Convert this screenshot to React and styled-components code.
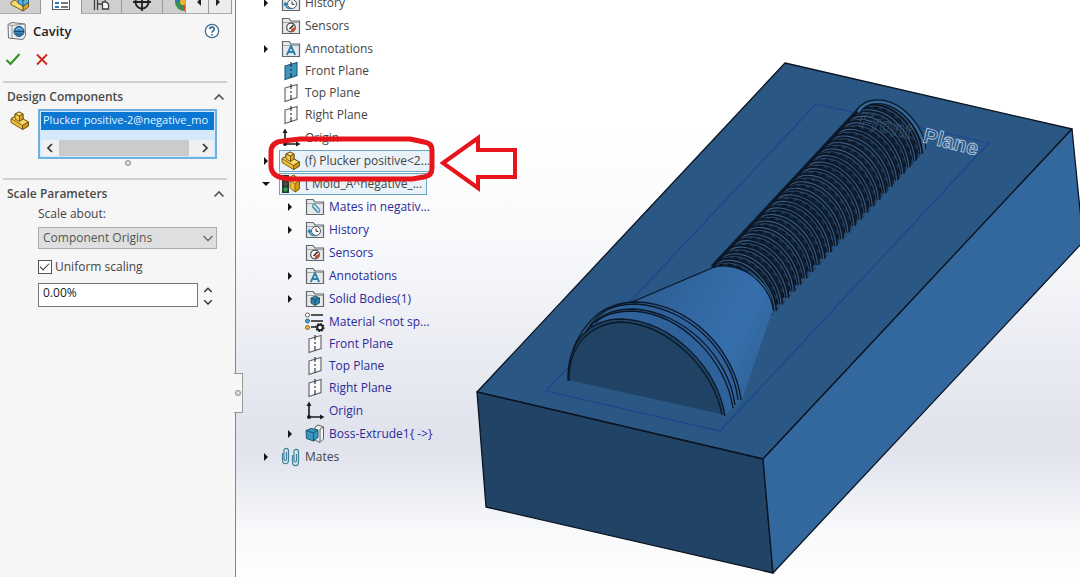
import React, { useState } from "react";
import styled, { createGlobalStyle } from "styled-components";

const GlobalStyle = createGlobalStyle`
  *, *::before, *::after { box-sizing: border-box; }
  body {
    margin: 0;
    font-family: "Open Sans", "Noto Sans", sans-serif;
    font-size: 12px;
    line-height: 16px;
    color: #444;
    background: #fff;
  }
  button, input, select { font: inherit; color: inherit; }
`;

/* ---------- icons ---------- */

const PartIcon = () => (
  <svg width="20" height="20" viewBox="0 0 20 20" aria-hidden="true">
    <g stroke="#6e5110" strokeWidth="0.9" strokeLinejoin="round">
      <path d="M1 7.500 L5 5.500 V3 L9 1 L13 3 V8 L18.500 11 V15 L12.500 18.500 L1 11.500 Z" fill="#f0bf33" />
      <path d="M5 3 L9 1 L13 3 L9.500 5 Z" fill="#fbe793" />
      <path d="M1 7.500 L5 5.500 L9.500 8.500 V10 L13 8 L18.500 11 L12.500 14.500 Z" fill="#f9dc70" />
      <path d="M12.500 14.500 L18.500 11 V15 L12.500 18.500 Z" fill="#cf9a1c" />
      <path d="M9.500 5 L13 3 V8 L9.500 10.500 Z" fill="#dba726" />
      <path d="M5 3 L9.500 5 V10.500 L5 8 Z" fill="#f5cb45" />
    </g>
  </svg>
);

const AssemblyIcon = () => (
  <svg width="20" height="20" viewBox="0 0 20 20" aria-hidden="true">
    <g stroke="#6e5110" strokeWidth="0.9" strokeLinejoin="round">
      <path d="M1 10 L5 8 L13 14 V19 L1 12.500 Z" fill="#f9dc70" />
      <path d="M13 14 L18.500 10.500 V15 L13 19 Z" fill="#d9a220" />
      <path d="M8 6 L13 3 L18.500 6 V10.500 L13 14 L8 11 Z" fill="#5fb0d8" stroke="#1d5878" />
      <path d="M8 6 L13 8.500 L18.500 6 M13 8.500 V14" fill="none" stroke="#1d5878" />
    </g>
  </svg>
);

const CavityIcon = () => (
  <svg width="20" height="20" viewBox="0 0 20 20" aria-hidden="true">
    <path d="M1 3.500 L5 1.500 L18 3 L18.500 14.500 L16 18.500 L1.500 17 Z" fill="#eef1f3" stroke="#68707a" />
    <path d="M1 3.500 L5 4.500 L18 3 M5 4.500 V17" fill="none" stroke="#8a929a" />
    <circle cx="12" cy="10.500" r="5" fill="#3a86ba" stroke="#1d4a70" />
    <path d="M7 10.500 H17 M9 13 H15" stroke="#1d4a70" />
    <path d="M9 8.500 Q12 6 15 8.500" stroke="#a2d1ee" fill="none" />
  </svg>
);

const HelpIcon = () => (
  <svg width="16" height="16" viewBox="0 0 16 16" aria-hidden="true">
    <circle cx="8" cy="8" r="6.700" fill="#fff" stroke="#4b6d8c" strokeWidth="1.300" />
    <path d="M5.800 6.300 C5.800 3.400 10.300 3.500 10.200 6.200 C10.200 7.900 8 7.900 8 9.800 M8 11 V12.500" fill="none" stroke="#27669c" strokeWidth="1.600" />
  </svg>
);

const Chevron = ({ dir = "up", size = 12, color = "#555" }) => {
  const d = {
    up: "M1.500 8.500 L6 4 L10.500 8.500",
    down: "M1.500 4 L6 8.500 L10.500 4",
    left: "M8 2 L4 6 L8 10",
    right: "M4 2 L8 6 L4 10",
  }[dir];
  return (
    <svg width={size} height={size} viewBox="0 0 12 12" aria-hidden="true">
      <path d={d} fill="none" stroke={color} strokeWidth="1.700" />
    </svg>
  );
};

const folderArt = {
  history: (
    <g fill="none">
      <circle cx="11" cy="11" r="4.500" fill="#fff" stroke="#4a5560" />
      <path d="M11 8.500 V11.300 H13.500" stroke="#222" />
      <path d="M4 10.500 C5 14.500 7.500 16 10.500 15.500 M3 12.500 L4.200 9.800 L6.500 12" stroke="#2f82b2" strokeWidth="1.400" />
    </g>
  ),
  sensor: (
    <g fill="none">
      <circle cx="10" cy="11.500" r="4.300" fill="#fff" stroke="#4c4c4c" strokeWidth="1.200" />
      <path d="M10 15.800 A4.300 4.300 0 0 0 14.300 11.500 L12 11.500 L10 13.500 Z" fill="#d44a28" />
      <path d="M8.500 13 L12.500 9" stroke="#222" strokeWidth="1.500" />
    </g>
  ),
  annotation: (
    <path d="M5.800 16 L10 7 L14.200 16 M7.500 13 H12.500" fill="none" stroke="#2d7ea8" strokeWidth="1.800" />
  ),
  mates: (
    <path d="M7 9 L12 15 C14.500 16 15.500 13.500 14 12 L10 7.500 C8 6.500 7 8.500 8.200 10 L12 14" fill="none" stroke="#4b94b8" strokeWidth="1.300" />
  ),
  solid: (
    <g stroke="#164561" strokeWidth="0.800">
      <path d="M6 9 L10.500 7 L14.500 9 L14.500 14 L10 16.500 L6 14 Z" fill="#2d83aa" />
      <path d="M6 9 L10 11 L14.500 9 M10 11 V16" fill="none" />
    </g>
  ),
};

const FolderIcon = ({ art }) => (
  <svg width="20" height="20" viewBox="0 0 20 20" aria-hidden="true">
    <path d="M1.500 17.500 V2.500 H8 L10 5 H18.500 V17.500 Z" fill="#e6e8ea" stroke="#63676c" strokeWidth="1.200" />
    <path d="M2 6.500 H18" stroke="#a2a6aa" />
    {folderArt[art]}
  </svg>
);

const PlaneIcon = ({ filled }) => (
  <svg width="20" height="20" viewBox="0 0 20 20" aria-hidden="true">
    <path d="M4 5 L16 1.500 V14.500 L4 18.500 Z" fill={filled ? "#3f93bf" : "#fafafa"} stroke={filled ? "#1f5878" : "#5d6063"} strokeWidth="1.100" />
    <path d="M10 1 V19" stroke="#26292c" strokeWidth="1.100" strokeDasharray="5 2 2 2" />
  </svg>
);

const OriginIcon = () => (
  <svg width="20" height="20" viewBox="0 0 20 20" aria-hidden="true">
    <path d="M4 3 V16 H17" fill="none" stroke="#1c1c1c" strokeWidth="1.600" />
    <path d="M1.500 5 L4 0.500 L6.500 5 Z M15 13.500 L19.500 16 L15 18.500 Z" fill="#1c1c1c" />
    <circle cx="4" cy="16" r="2" fill="#1c1c1c" />
  </svg>
);

const MoldIcon = () => (
  <svg width="20" height="20" viewBox="0 0 20 20" aria-hidden="true">
    <rect x="1" y="1" width="7" height="18" fill="#2a332c" />
    <circle cx="4.500" cy="4.500" r="2.200" fill="#c03a2b" />
    <circle cx="4.500" cy="10" r="2.200" fill="#4c4a3a" />
    <circle cx="4.500" cy="15.500" r="2.200" fill="#31a04a" />
    <g stroke="#7a5a10" strokeWidth="0.800">
      <path d="M9 3 L13 1 L18.500 6 V15 L14 18 L9 14 Z" fill="#f0bf33" />
      <path d="M9 3 L13 1 L14 5 L18.500 7 L14 9.500 L9 7 Z" fill="#fae080" />
      <path d="M14 9.500 L18.500 7 V15 L14 18 Z" fill="#cf9a1c" />
    </g>
  </svg>
);

const MaterialIcon = () => (
  <svg width="20" height="20" viewBox="0 0 20 20" aria-hidden="true">
    <path d="M6 3 H18 M6 9 H18 M6 15 H11" stroke="#222" strokeWidth="1.500" />
    <circle cx="2.500" cy="3" r="2" fill="#fff" stroke="#666" />
    <circle cx="2.500" cy="9" r="2" fill="#56a7cf" stroke="#2a6580" />
    <circle cx="2.500" cy="15.500" r="2" fill="#f0be2e" stroke="#86661a" />
    <circle cx="15" cy="15.500" r="2.800" fill="#fff" stroke="#222" strokeWidth="2" />
    <circle cx="15" cy="15.500" r="4" fill="none" stroke="#222" strokeWidth="1.200" strokeDasharray="1.600 1.500" />
  </svg>
);

const ExtrudeIcon = () => (
  <svg width="20" height="20" viewBox="0 0 20 20" aria-hidden="true">
    <path d="M10 3 L13 1 L18.500 3 V15 L15 18.500 L10 16 Z" fill="#f3f4f5" stroke="#5d6063" />
    <path d="M15 5 L18.500 3 M15 5 V18" stroke="#5d6063" />
    <path d="M1 6.500 L6 4.500 L13 6 V13.500 L8.500 17 L1.500 14.500 Z" fill="#3b97bd" stroke="#18566f" />
    <path d="M1 6.500 L8.500 9 L13 6 M8.500 9 V17" fill="none" stroke="#18566f" />
  </svg>
);

const ClipsIcon = () => (
  <svg width="20" height="20" viewBox="0 0 20 20" aria-hidden="true">
    <g fill="none" stroke="#3a8198" strokeWidth="1.200">
      <path d="M1.500 6 V13 C1.500 18 7.500 18 7.500 13 V4 C7.500 0.500 2.500 0.500 3 4 V12 C3.500 14 5.500 14 5.500 12 V5" />
      <path d="M11.500 8 V14.500 C11.500 20 17.500 20 17.500 14.500 V5 C17.500 1.500 12.500 1.500 13 5 V13.500 C13.500 15.500 15.500 15.500 15.500 13.500 V7" />
    </g>
  </svg>
);

const PropertyIcon = () => (
  <svg width="20" height="20" viewBox="0 0 20 20" aria-hidden="true">
    <rect x="1.500" y="1.500" width="17" height="16" fill="#fff" stroke="#55595e" />
    <path d="M4 7 H8 M4 11 H8 M4 15 H8" stroke="#2b7bb0" strokeWidth="2" />
    <path d="M10 7 H17 M10 11 H17 M10 15 H17" stroke="#4c5054" strokeWidth="1.300" />
  </svg>
);

const ConfigIcon = () => (
  <svg width="20" height="20" viewBox="0 0 20 20" aria-hidden="true">
    <path d="M3.500 2 V18 M6.500 2 V18 M6.500 12 H12" fill="none" stroke="#3c4044" strokeWidth="1.300" />
    <path d="M9 6 H14 V9 M11.500 10 H15 L17.500 12 V17 H11.500 Z" fill="#fff" stroke="#3c4044" strokeWidth="1.300" />
  </svg>
);

const TargetIcon = () => (
  <svg width="20" height="20" viewBox="0 0 20 20" aria-hidden="true">
    <circle cx="10" cy="10" r="6.500" fill="none" stroke="#222" strokeWidth="1.800" />
    <path d="M10 1 V19 M1 10 H19" stroke="#222" strokeWidth="1.800" />
  </svg>
);

const AppearanceIcon = () => (
  <svg width="20" height="20" viewBox="0 0 20 20" aria-hidden="true">
    <path d="M10 10 L1 10 A9 9 0 0 1 10 1 Z" fill="#2b76b6" />
    <path d="M10 10 L10 1 A9 9 0 0 1 19 10 Z" fill="#e6b92e" />
    <path d="M10 10 L1 10 A9 9 0 0 0 10 19 Z" fill="#37904a" />
    <path d="M10 10 L19 10 A9 9 0 0 1 10 19 Z" fill="#d8432f" />
    <circle cx="9" cy="10" r="3" fill="#e6b92e" />
  </svg>
);

/* ---------- property panel ---------- */

const Page = styled.div`
  display: flex;
  min-height: 100vh;
  overflow: hidden;
`;

const Sidebar = styled.aside`
  position: relative;
  flex: 0 0 236px;
  background: #f6f6f6;
  border-right: 1px solid #85878a;
`;

const TabStrip = styled.nav`
  display: flex;
  height: 24px;
  margin-top: -10px;
  padding-right: 3px;
`;

const Tab = styled.button`
  display: flex;
  flex: ${(p) => (p.$narrow ? "0 0 23px" : "1 1 0")};
  align-items: center;
  justify-content: ${(p) => (p.$cut ? "flex-start" : "center")};
  min-width: 0;
  padding: ${(p) => (p.$cut ? "0 0 0 11px" : "0")};
  overflow: hidden;
  border: 0;
  border-right: 1px solid #9a9a9a;
  border-bottom: ${(p) => (p.$active ? "0" : "1px solid #adadad")};
  background: ${(p) => (p.$active ? "#f6f6f6" : p.$scroll ? "#ececec" : "#cfcfcf")};

  svg { flex: none; }
`;

const Arrow = styled.span`
  border: 4px solid transparent;
  border-left-color: ${(p) => (p.$left ? "transparent" : "#222")};
  border-right-color: ${(p) => (p.$left ? "#222" : "transparent")};
`;

const TitleBar = styled.header`
  display: flex;
  align-items: center;
  gap: 6px;
  height: 34px;
  padding: 0 15px 0 7px;
`;

const Title = styled.h1`
  flex: 1;
  margin: 0;
  font-size: 13px;
  font-weight: 600;
  color: #222;
`;

const IconButton = styled.button`
  display: flex;
  align-items: center;
  justify-content: center;
  padding: 0;
  border: 0;
  background: transparent;
`;

const Actions = styled.div`
  display: flex;
  gap: 14px;
  height: 33px;
  padding: 3px 5px;
  align-items: flex-start;
`;

const Section = styled.section`
  margin: 0 8px 0 3px;
  padding: 5px 0 0 4px;
  border-top: 2px solid #cfcfcf;
  height: ${(p) => (p.$short ? "97px" : "auto")};
`;

const SectionHead = styled.div`
  display: flex;
  align-items: center;
  justify-content: space-between;
  height: 17px;
  padding-right: 2px;
`;

const SectionTitle = styled.h2`
  margin: 0;
  font-size: 12px;
  font-weight: 600;
  color: #4a4a4a;
`;

const Selection = styled.div`
  display: grid;
  grid-template-columns: 31px 1fr;
  padding: 4px 10px 0 0;

  > svg { margin: 2px 0 0 3px; }
`;

const ListBox = styled.div`
  min-width: 0;
  height: 50px;
  padding: 1px;
  border: 2px solid #6cb2e0;
  background: #d6e9fa;
`;

const ListOption = styled.div`
  height: 18px;
  padding-left: 2px;
  font-size: 11px;
  white-space: nowrap;
  color: #e9f5ff;
  background: #0c76d3;
`;

const ScrollBar = styled.div`
  display: grid;
  grid-template-columns: 18px 1fr 18px;
  height: 16px;
  margin-top: 10px;
  background: #f0f0f0;
`;

const Thumb = styled.span`
  margin-right: 7px;
  background: #cbcbcb;
`;

const Grip = styled.span`
  display: block;
  width: 6px;
  height: 6px;
  border: 1px solid #8a8a8a;
  border-radius: 50%;
  background: #ddd;
`;

const GripRow = styled.div`
  display: flex;
  justify-content: center;
  grid-column: 2;
  padding-top: 1px;
`;

const Fields = styled.div`
  display: flex;
  flex-direction: column;
  align-items: stretch;
  padding: 4px 10px 0 31px;
`;

const SelectFrame = styled.div`
  display: grid;
  align-items: center;
  margin: 5px 0 9px;

  > * { grid-area: 1 / 1; }
  > svg { justify-self: end; margin-right: 3px; pointer-events: none; }
`;

const Select = styled.select`
  appearance: none;
  width: 100%;
  height: 22px;
  padding: 0 20px 0 4px;
  border: 1px solid #acacac;
  border-radius: 0;
  background: #dfdfdf;
  color: #555;
`;

const CheckLabel = styled.label`
  display: flex;
  align-items: center;
  gap: 3px;
  height: 18px;
`;

const Check = styled.input`
  appearance: none;
  width: 14px;
  height: 14px;
  margin: 0;
  border: 1px solid #555;
  background: #fff;

  &:checked::after {
    content: "";
    display: block;
    width: 9px;
    height: 5px;
    margin: 2px 1px;
    border: solid #333;
    border-width: 0 0 1px 1px;
    transform: rotate(-45deg);
  }
`;

const SpinRow = styled.div`
  display: grid;
  grid-template-columns: 1fr 19px;
  height: 24px;
  margin-top: 7px;
`;

const NumberBox = styled.input`
  min-width: 0;
  padding: 0 4px 4px;
  border: 1px solid #777;
  background: #fff;
  color: #222;
`;

const SpinButtons = styled.div`
  display: flex;
  flex-direction: column;
  align-items: center;
  justify-content: space-between;
  padding-top: 2px;
`;

const PanelHandle = styled.button`
  position: absolute;
  top: 373px;
  left: 234px;
  z-index: 2;
  display: flex;
  align-items: center;
  justify-content: center;
  width: 9px;
  height: 40px;
  padding: 0;
  border: 1px solid #999;
  border-left: 0;
  background: #f6f6f6;
`;

/* ---------- graphics area ---------- */

const Viewport = styled.main`
  position: relative;
  flex: 1;
  min-width: 0;
  overflow: hidden;
  background: linear-gradient(#fff 0%, #fff 22%, #f8f9fb 42%, #eceef4 58%, #e0e3ec 76%, #e4e7ef 81%, #f8f9fb 92%, #fefefe 100%);
`;

const ModelCanvas = styled.svg`
  position: absolute;
  inset: 0;
  width: 100%;
  height: 100%;
`;

const CallOut = styled.svg`
  position: absolute;
  top: 0;
  left: 0;
  pointer-events: none;
`;

const Tree = styled.ul`
  position: relative;
  width: 200px;
  margin: -9px 0 0 23px;
  padding: 0;
  list-style: none;
`;

const Branch = styled.ul`
  margin: 0;
  padding: 0 0 0 24px;
  list-style: none;
`;

const Row = styled.div`
  display: flex;
  align-items: center;
  height: ${(p) => (p.$plane ? "22px" : "23px")};
  color: ${(p) => (p.$nested ? "#2a2a98" : "#444")};
`;

const Twisty = styled.button`
  display: flex;
  flex: 0 0 20px;
  width: 20px;
  padding: 0 0 0 3px;
  border: 0;
  background: transparent;
`;

const Marker = styled.svg`
  width: 8px;
  height: 8px;
  fill: #161616;
`;

const ItemFace = styled.span`
  display: flex;
  align-items: center;
  gap: 4px;
  height: ${(p) => (p.$boxed ? "22px" : "20px")};
  width: ${(p) => (p.$boxed ? `${p.$boxed}px` : "auto")};
  padding-left: 2px;
  outline: ${(p) => (p.$boxed ? "1px solid #6ea5c4" : "none")};
  outline-offset: -1px;
  background: ${(p) => (p.$boxed ? "#e9f2f8" : "transparent")};
  white-space: nowrap;
`;

const items = [
  { label: "History", icon: <FolderIcon art="history" />, open: false },
  { label: "Sensors", icon: <FolderIcon art="sensor" /> },
  { label: "Annotations", icon: <FolderIcon art="annotation" />, open: false },
  { label: "Front Plane", icon: <PlaneIcon filled />, plane: true },
  { label: "Top Plane", icon: <PlaneIcon />, plane: true },
  { label: "Right Plane", icon: <PlaneIcon />, plane: true },
  { label: "Origin", icon: <OriginIcon /> },
  { label: "(f) Plucker positive<2...", icon: <PartIcon />, open: false, boxed: 152 },
  {
    label: "[ Mold_A^negative_...",
    icon: <MoldIcon />,
    open: true,
    boxed: 148,
    children: [
      { label: "Mates in negativ...", icon: <FolderIcon art="mates" />, open: false },
      { label: "History", icon: <FolderIcon art="history" />, open: false },
      { label: "Sensors", icon: <FolderIcon art="sensor" /> },
      { label: "Annotations", icon: <FolderIcon art="annotation" />, open: false },
      { label: "Solid Bodies(1)", icon: <FolderIcon art="solid" />, open: false },
      { label: "Material <not sp...", icon: <MaterialIcon /> },
      { label: "Front Plane", icon: <PlaneIcon />, plane: true },
      { label: "Top Plane", icon: <PlaneIcon />, plane: true },
      { label: "Right Plane", icon: <PlaneIcon />, plane: true },
      { label: "Origin", icon: <OriginIcon /> },
      { label: "Boss-Extrude1{ ->}", icon: <ExtrudeIcon />, open: false },
    ],
  },
  { label: "Mates", icon: <ClipsIcon />, open: false },
];

const TreeItem = ({ item, nested }) => (
  <li>
    <Row $plane={item.plane} $nested={nested}>
      <Twisty aria-label={`Toggle ${item.label}`} tabIndex={item.open === undefined ? -1 : 0}>
        {item.open !== undefined && (
          <Marker viewBox="0 0 8 8">
            <path d={item.open ? "M0 2 H8 L4 6 Z" : "M2 0 L6 4 L2 8 Z"} />
          </Marker>
        )}
      </Twisty>
      <ItemFace $boxed={item.boxed}>
        {item.icon}
        {item.label}
      </ItemFace>
    </Row>
    {item.children && (
      <Branch>
        {item.children.map((c) => (
          <TreeItem key={c.label} item={c} nested />
        ))}
      </Branch>
    )}
  </li>
);

/* ---------- mold model ---------- */

const RIB = "c9 -9 25 -7 38 3 c14 11 22 27 23 42";
const RIB_COUNT = 25;
const ribs = Array.from({ length: RIB_COUNT }, (_, i) => {
  const t = i / (RIB_COUNT - 1);
  return `M${860 - t * 146} ${109 + t * 157}${RIB}`;
});
const CAP = "M858 112 C866 98 887 99 902 111 C914 121 923 135 924 149";

const Model = () => (
  <ModelCanvas viewBox="236 0 844 577" preserveAspectRatio="xMinYMin meet" role="img" aria-label="Mold block with plucker core">
    <defs>
      <linearGradient id="cone" x1="0" y1="0" x2="1" y2="0.500">
        <stop offset="0" stopColor="#2c5b8e" />
        <stop offset="0.500" stopColor="#3368a3" />
        <stop offset="0.800" stopColor="#376fad" />
        <stop offset="1" stopColor="#31659d" />
      </linearGradient>
    </defs>
    <g stroke="#0b1420" strokeWidth="1.300" strokeLinejoin="round">
      <path d="M785 63 L1072 129 L763 459 L477 392 Z" fill="#2a5783" />
      <path d="M477 392 L763 459 L773 573 L486 507 Z" fill="#214365" />
      <path d="M1072 129 L1082 230 L1082 243 L773 573 L763 459 Z" fill="#33689f" />
    </g>
    <path d="M816 104 L989 143 L720 431 L546 391 Z" fill="none" stroke="#1c4590" strokeWidth="1.200" />

    <path d="M860 109 c9 -9 25 -7 38 3 c14 11 22 27 23 42 L774 308 L712 268 Z" fill="#152a43" />
    <g fill="none">
      {ribs.map((d) => (
        <g key={d}>
          <path d={d} stroke="#0c1828" strokeWidth="4.600" />
          <path d={d} stroke="#3a5c80" strokeWidth="1.100" />
          <path d={d} stroke="#2d4b6d" strokeWidth="1.100" transform="translate(-2 3)" />
          <path d={d} stroke="#0a1320" strokeWidth="1.500" strokeDasharray="5 4" transform="translate(-3 4)" />
        </g>
      ))}
    </g>
    <path d="M860 108 L712 267" stroke="#0c1828" strokeWidth="3.500" />
    <path d={CAP} fill="none" stroke="#0a1422" strokeWidth="5" />
    <path d={CAP} fill="none" stroke="#356799" strokeWidth="2.600" />
    <g fontFamily="Liberation Sans, sans-serif" fontSize="21" fontWeight="700" fill="none" transform="rotate(14 858 126)">
      <text x="858" y="126" stroke="#4a6482" strokeWidth="0.700" opacity="0.800">Front</text>
      <text x="924" y="126" stroke="#b4c5df" strokeWidth="0.900">Plane</text>
    </g>

    <path d="M712 268 C730 261 771 272 773 309 L742 400 C725 345 685 304 630 303 Z" fill="url(#cone)" />
    <path d="M632 302 L712 268 C722 264 738 266 750 274 C764 284 772 298 773 309" fill="none" stroke="#0b1726" strokeWidth="1.300" />
    <path d="M568 380 C567 350 590 305 637 302 C690 304 735 350 741 401 L725 415 Z" fill="#2f629a" />
    <path d="M568 380 C567 343 588 319 622 320 C672 323 718 368 725 415 Z" fill="#204365" />
    <g fill="none" stroke="#0b1726" strokeWidth="1.300">
      <path d="M568 381 C567 343 588 319 622 319 C673 322 718 368 725 416" />
      <path d="M569 381 C568 347 589 323 622 322 C670 325 714 370 722 415" />
      <path d="M573 349 C581 330 597 302 637 302 C690 304 735 350 741 400" />
      <path d="M586 331 C600 309 616 304 636 304 C688 307 733 352 738 400" />
      <path d="M590 327 C602 312 617 309 634 309 C684 312 729 357 735 405" />
      <path d="M595 323 C604 314 618 311 633 311 C682 314 726 360 733 408" />
    </g>
  </ModelCanvas>
);

export default function App() {
  const [uniform, setUniform] = useState(true);
  const [amount, setAmount] = useState("0.00%");
  return (
    <>
      <GlobalStyle />
      <Page>
        <Sidebar>
          <TabStrip aria-label="Manager tabs">
            <Tab aria-label="Feature tree"><AssemblyIcon /></Tab>
            <Tab $active aria-label="Properties"><PropertyIcon /></Tab>
            <Tab aria-label="Configurations"><ConfigIcon /></Tab>
            <Tab aria-label="Dimensions"><TargetIcon /></Tab>
            <Tab $narrow $cut aria-label="Appearances"><AppearanceIcon /></Tab>
            <Tab $narrow $scroll aria-label="Previous tab"><Arrow $left /></Tab>
            <Tab $narrow $scroll aria-label="Next tab"><Arrow /></Tab>
          </TabStrip>
          <TitleBar>
            <CavityIcon />
            <Title>Cavity</Title>
            <IconButton aria-label="Help"><HelpIcon /></IconButton>
          </TitleBar>
          <Actions>
            <IconButton aria-label="OK">
              <svg width="16" height="16" viewBox="0 0 16 16"><path d="M1.500 9 L5.500 13 L14.500 3" fill="none" stroke="#35961f" strokeWidth="2.200" /></svg>
            </IconButton>
            <IconButton aria-label="Cancel">
              <svg width="14" height="16" viewBox="0 0 14 16"><path d="M2 3.500 L12 13.500 M12 3.500 L2 13.500" fill="none" stroke="#c92a1c" strokeWidth="1.900" /></svg>
            </IconButton>
          </Actions>

          <Section $short>
            <SectionHead>
              <SectionTitle>Design Components</SectionTitle>
              <IconButton aria-label="Collapse Design Components"><Chevron /></IconButton>
            </SectionHead>
            <Selection>
              <PartIcon />
              <ListBox role="listbox" aria-label="Design Components">
                <ListOption role="option" aria-selected="true">Plucker positive-2@negative_mo</ListOption>
                <ScrollBar>
                  <IconButton aria-label="Scroll left"><Chevron dir="left" color="#333" /></IconButton>
                  <Thumb />
                  <IconButton aria-label="Scroll right"><Chevron dir="right" color="#333" /></IconButton>
                </ScrollBar>
              </ListBox>
              <GripRow><Grip /></GripRow>
            </Selection>
          </Section>

          <Section>
            <SectionHead>
              <SectionTitle>Scale Parameters</SectionTitle>
              <IconButton aria-label="Collapse Scale Parameters"><Chevron /></IconButton>
            </SectionHead>
            <Fields>
              <label htmlFor="scale-about">Scale about:</label>
              <SelectFrame>
                <Select id="scale-about" defaultValue="origins">
                  <option value="origins">Component Origins</option>
                </Select>
                <Chevron dir="down" color="#777" />
              </SelectFrame>
              <CheckLabel>
                <Check type="checkbox" checked={uniform} onChange={(e) => setUniform(e.target.checked)} />
                Uniform scaling
              </CheckLabel>
              <SpinRow>
                <NumberBox aria-label="Scale factor" value={amount} onChange={(e) => setAmount(e.target.value)} />
                <SpinButtons>
                  <IconButton aria-label="Increase"><Chevron size={10} color="#333" /></IconButton>
                  <IconButton aria-label="Decrease"><Chevron size={10} dir="down" color="#333" /></IconButton>
                </SpinButtons>
              </SpinRow>
            </Fields>
          </Section>
          <PanelHandle aria-label="Resize panel"><Grip /></PanelHandle>
        </Sidebar>

        <Viewport>
          <Model />
          <Tree>
            {items.map((it) => (
              <TreeItem key={it.label} item={it} />
            ))}
          </Tree>
          <CallOut width="300" height="200" viewBox="236 0 300 200" aria-hidden="true">
            <g fill="none" stroke="#e8141c" strokeWidth="5" strokeLinejoin="round">
              <path d="M283 141 L300 139 H410 L424 142 Q432 143 432 150 V168 Q432 176 424 177 L412 179 H290 Q271 178 271 166 V152 Q271 142 283 141 Z" />
              <path d="M443 163 L478 138 V150 H515 V177 H478 V188 Z" strokeWidth="4" strokeLinejoin="miter" />
            </g>
          </CallOut>
        </Viewport>
      </Page>
    </>
  );
}
